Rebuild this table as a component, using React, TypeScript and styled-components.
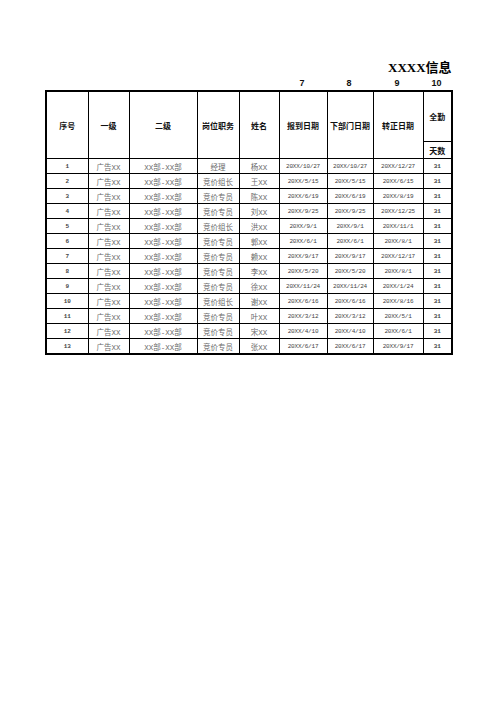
import React from "react";
import styled, { createGlobalStyle } from "styled-components";

const GlobalStyle = createGlobalStyle`
  body {
    margin: 0;
    background: #ffffff;
  }
`;

const widths = [42, 41, 68, 42, 40, 48, 46, 50, 29];

const Page = styled.div`
  padding: 60px 0 0 45px;
`;

const TitleRow = styled.div`
  width: 406px;
  height: 16px;
  box-sizing: border-box;
  padding-left: 343px;
  white-space: nowrap;
  font-family: "Liberation Serif", "Noto Sans CJK SC", serif;
  font-weight: 700;
  font-size: 13px;
  line-height: 16px;
  color: #000;
`;

const NumberRow = styled.div`
  display: grid;
  grid-template-columns: ${widths.map((w) => `${w}px`).join(" ")};
  height: 14px;
  font-family: "Liberation Sans", sans-serif;
  font-weight: 700;
  font-size: 9px;
  line-height: 14px;
  text-align: center;
  color: #111;
`;

const Sheet = styled.table`
  border-collapse: collapse;
  table-layout: fixed;
  width: 406px;
  border: 2px solid #000;
`;

const HeadCell = styled.th<{ $h?: number }>`
  border: 1px solid #000;
  padding: 0;
  height: ${(p) => (p.$h ? `${p.$h}px` : "auto")};
  font-family: "Noto Sans CJK SC", sans-serif;
  font-weight: 700;
  font-size: 8px;
  color: #111;
  text-align: center;
  vertical-align: middle;
  white-space: nowrap;
`;

const Cell = styled.td<{ $kind: "text" | "date" | "num" }>`
  border: 1px solid #000;
  padding: 0;
  height: 14px;
  text-align: center;
  vertical-align: middle;
  white-space: nowrap;
  overflow: hidden;
  font-family: "Liberation Mono", "Noto Sans CJK SC", monospace;
  font-size: ${(p) => (p.$kind === "text" ? "7.5px" : "6px")};
  letter-spacing: ${(p) => (p.$kind === "date" ? "-0.2px" : "0")};
  font-weight: ${(p) => (p.$kind === "num" ? 700 : 400)};
  color: ${(p) => (p.$kind === "text" ? "#6a6a6a" : "#444")};
`;

const rows = [
  ["1", "杨XX", "经理", "20XX/10/27", "20XX/10/27", "20XX/12/27"],
  ["2", "王XX", "竞价组长", "20XX/5/15", "20XX/5/15", "20XX/6/15"],
  ["3", "陈XX", "竞价专员", "20XX/6/19", "20XX/6/19", "20XX/8/19"],
  ["4", "刘XX", "竞价专员", "20XX/9/25", "20XX/9/25", "20XX/12/25"],
  ["5", "洪XX", "竞价组长", "20XX/9/1", "20XX/9/1", "20XX/11/1"],
  ["6", "郭XX", "竞价专员", "20XX/6/1", "20XX/6/1", "20XX/8/1"],
  ["7", "赖XX", "竞价专员", "20XX/9/17", "20XX/9/17", "20XX/12/17"],
  ["8", "李XX", "竞价专员", "20XX/5/20", "20XX/5/20", "20XX/8/1"],
  ["9", "徐XX", "竞价专员", "20XX/11/24", "20XX/11/24", "20XX/1/24"],
  ["10", "谢XX", "竞价组长", "20XX/6/16", "20XX/6/16", "20XX/8/16"],
  ["11", "叶XX", "竞价专员", "20XX/3/12", "20XX/3/12", "20XX/5/1"],
  ["12", "宋XX", "竞价专员", "20XX/4/10", "20XX/4/10", "20XX/6/1"],
  ["13", "张XX", "竞价专员", "20XX/6/17", "20XX/6/17", "20XX/9/17"],
];

const headers = ["序号", "一级", "二级", "岗位职务", "姓名", "报到日期", "下部门日期", "转正日期"];

export default function App() {
  return (
    <Page>
      <GlobalStyle />
      <TitleRow>XXXX信息</TitleRow>
      <NumberRow>
        <span />
        <span />
        <span />
        <span />
        <span />
        <span>7</span>
        <span>8</span>
        <span>9</span>
        <span>10</span>
      </NumberRow>
      <Sheet>
        <colgroup>
          {widths.map((w, i) => (
            <col key={i} style={{ width: w }} />
          ))}
        </colgroup>
        <thead>
          <tr>
            {headers.map((h) => (
              <HeadCell key={h} rowSpan={2}>
                {h}
              </HeadCell>
            ))}
            <HeadCell $h={49}>全勤</HeadCell>
          </tr>
          <tr>
            <HeadCell $h={16}>天数</HeadCell>
          </tr>
        </thead>
        <tbody>
          {rows.map(([no, name, job, d1, d2, d3]) => (
            <tr key={no}>
              <Cell $kind="num">{no}</Cell>
              <Cell $kind="text">广告XX</Cell>
              <Cell $kind="text">XX部-XX部</Cell>
              <Cell $kind="text">{job}</Cell>
              <Cell $kind="text">{name}</Cell>
              <Cell $kind="date">{d1}</Cell>
              <Cell $kind="date">{d2}</Cell>
              <Cell $kind="date">{d3}</Cell>
              <Cell $kind="num">31</Cell>
            </tr>
          ))}
        </tbody>
      </Sheet>
    </Page>
  );
}
